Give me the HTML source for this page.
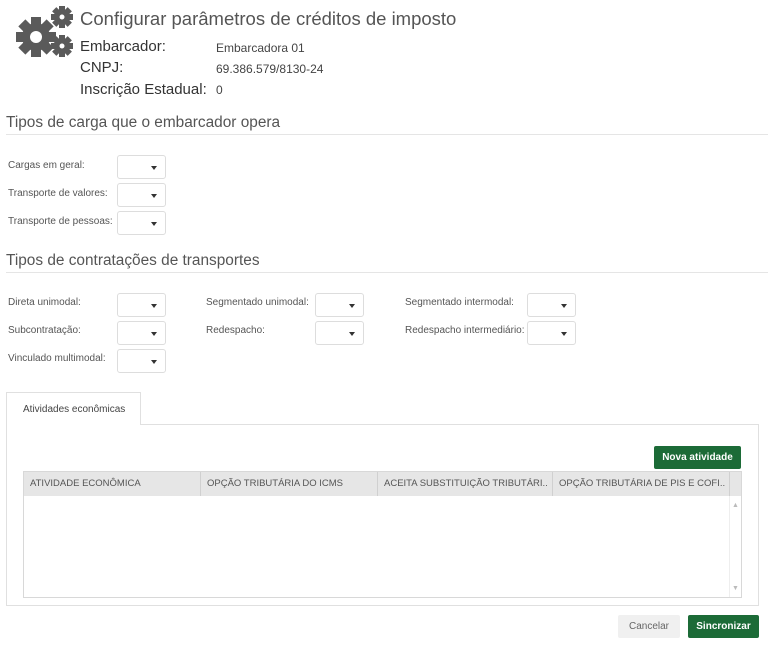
<!DOCTYPE html>
<html><head><meta charset="utf-8"><style>
*{box-sizing:border-box;margin:0;padding:0}
body{width:774px;height:646px;background:#fff;font-family:"Liberation Sans",sans-serif;color:#555;position:relative;overflow:hidden}
.a{position:absolute;white-space:nowrap}
.lbl{font-size:10px;color:#555}
.dd{position:absolute;width:49px;height:24px;border:1px solid #ddd;border-radius:3px;background:#fff}
.dd:after{content:"";position:absolute;left:33px;top:10px;border-left:3px solid transparent;border-right:3px solid transparent;border-top:4px solid #333}
.h2{font-size:15.4px;color:#555}
.line{position:absolute;left:6px;right:6px;height:1px;background:#e5e5e5}
.btn{position:absolute;border-radius:2px;font-size:10px;text-align:center;font-weight:bold}
.th{position:absolute;top:0;height:24px;line-height:24px;font-size:9.5px;color:#555;padding-left:6px;border-right:1px solid #d0d0d0}
</style></head><body>
<svg class="a" style="left:14px;top:4px" width="62" height="56" viewBox="0 0 62 56">
<g fill="#5a5a5a">
<g transform="translate(22,33)"><circle r="14"/><rect x="-5" y="-20" width="10" height="40"/><rect x="-20" y="-5" width="40" height="10"/><g transform="rotate(45)"><rect x="-5" y="-20" width="10" height="40"/><rect x="-20" y="-5" width="40" height="10"/></g></g>
<g transform="translate(48,13)"><circle r="7"/><rect x="-3" y="-11" width="6" height="22"/><rect x="-11" y="-3" width="22" height="6"/><g transform="rotate(45)"><rect x="-3" y="-11" width="6" height="22"/><rect x="-11" y="-3" width="22" height="6"/></g></g>
<g transform="translate(48,42)"><circle r="7"/><rect x="-3" y="-11" width="6" height="22"/><rect x="-11" y="-3" width="22" height="6"/><g transform="rotate(45)"><rect x="-3" y="-11" width="6" height="22"/><rect x="-11" y="-3" width="22" height="6"/></g></g>
</g>
<circle cx="22" cy="33" r="6" fill="#fff"/><circle cx="48" cy="13" r="2.5" fill="#fff"/><circle cx="48" cy="42" r="2.5" fill="#fff"/>
</svg>
<div class="a" style="left:80px;top:8px;font-size:18.5px;color:#555">Configurar parâmetros de créditos de imposto</div>
<div class="a" style="left:80px;top:38px;font-size:15px;color:#333">Embarcador:</div>
<div class="a" style="left:216px;top:41px;font-size:12px;color:#444">Embarcadora 01</div>
<div class="a" style="left:80px;top:59px;font-size:15px;color:#333">CNPJ:</div>
<div class="a" style="left:216px;top:62px;font-size:12px;color:#444">69.386.579/8130-24</div>
<div class="a" style="left:80px;top:81px;font-size:15px;color:#333">Inscrição Estadual:</div>
<div class="a" style="left:216px;top:83px;font-size:12px;color:#444">0</div>

<div class="a h2" style="left:6px;top:114px">Tipos de carga que o embarcador opera</div>
<div class="line" style="top:134px"></div>
<div class="a lbl" style="left:8px;top:160px">Cargas em geral:</div><div class="dd" style="left:117px;top:155px"></div>
<div class="a lbl" style="left:8px;top:188px">Transporte de valores:</div><div class="dd" style="left:117px;top:183px"></div>
<div class="a lbl" style="left:8px;top:216px">Transporte de pessoas:</div><div class="dd" style="left:117px;top:211px"></div>

<div class="a h2" style="left:6px;top:252px">Tipos de contratações de transportes</div>
<div class="line" style="top:272px"></div>
<div class="a lbl" style="left:8px;top:297px">Direta unimodal:</div><div class="dd" style="left:117px;top:293px"></div>
<div class="a lbl" style="left:206px;top:297px">Segmentado unimodal:</div><div class="dd" style="left:315px;top:293px"></div>
<div class="a lbl" style="left:405px;top:297px">Segmentado intermodal:</div><div class="dd" style="left:527px;top:293px"></div>
<div class="a lbl" style="left:8px;top:325px">Subcontratação:</div><div class="dd" style="left:117px;top:321px"></div>
<div class="a lbl" style="left:206px;top:325px">Redespacho:</div><div class="dd" style="left:315px;top:321px"></div>
<div class="a lbl" style="left:405px;top:325px">Redespacho intermediário:</div><div class="dd" style="left:527px;top:321px"></div>
<div class="a lbl" style="left:8px;top:353px">Vinculado multimodal:</div><div class="dd" style="left:117px;top:349px"></div>

<div class="a" style="left:6px;top:424px;width:753px;height:182px;border:1px solid #e0e0e0"></div>
<div class="a" style="left:6px;top:392px;width:135px;height:33px;border:1px solid #e0e0e0;border-bottom:none;background:#fff;font-size:10px;color:#444;padding:11px 0 0 16px">Atividades econômicas</div>
<div class="btn" style="left:654px;top:446px;width:87px;height:23px;line-height:23px;background:#1c6b37;color:#fff">Nova atividade</div>
<div class="a" style="left:23px;top:471px;width:719px;height:127px;border:1px solid #d8d8d8">
<div class="a" style="left:0;top:0;width:717px;height:24px;background:#e6e6e6"></div>
<div class="th" style="left:0;width:177px">ATIVIDADE ECONÔMICA</div>
<div class="th" style="left:177px;width:177px">OPÇÃO TRIBUTÁRIA DO ICMS</div>
<div class="th" style="left:354px;width:175px;overflow:hidden">ACEITA SUBSTITUIÇÃO TRIBUTÁRI..</div>
<div class="th" style="left:529px;width:177px;overflow:hidden">OPÇÃO TRIBUTÁRIA DE PIS E COFI..</div>
<div class="a" style="left:705px;top:24px;width:12px;height:101px;border-left:1px solid #eee"></div>
<div class="a" style="left:708px;top:30px;font-size:7px;color:#bbb">▲</div>
<div class="a" style="left:708px;top:113px;font-size:7px;color:#bbb">▼</div>
</div>
<div class="btn" style="left:618px;top:615px;width:62px;height:23px;line-height:23px;background:#f0f0f0;color:#666;font-weight:normal">Cancelar</div>
<div class="btn" style="left:688px;top:615px;width:71px;height:23px;line-height:23px;background:#1c6b37;color:#fff">Sincronizar</div>
</body></html>
